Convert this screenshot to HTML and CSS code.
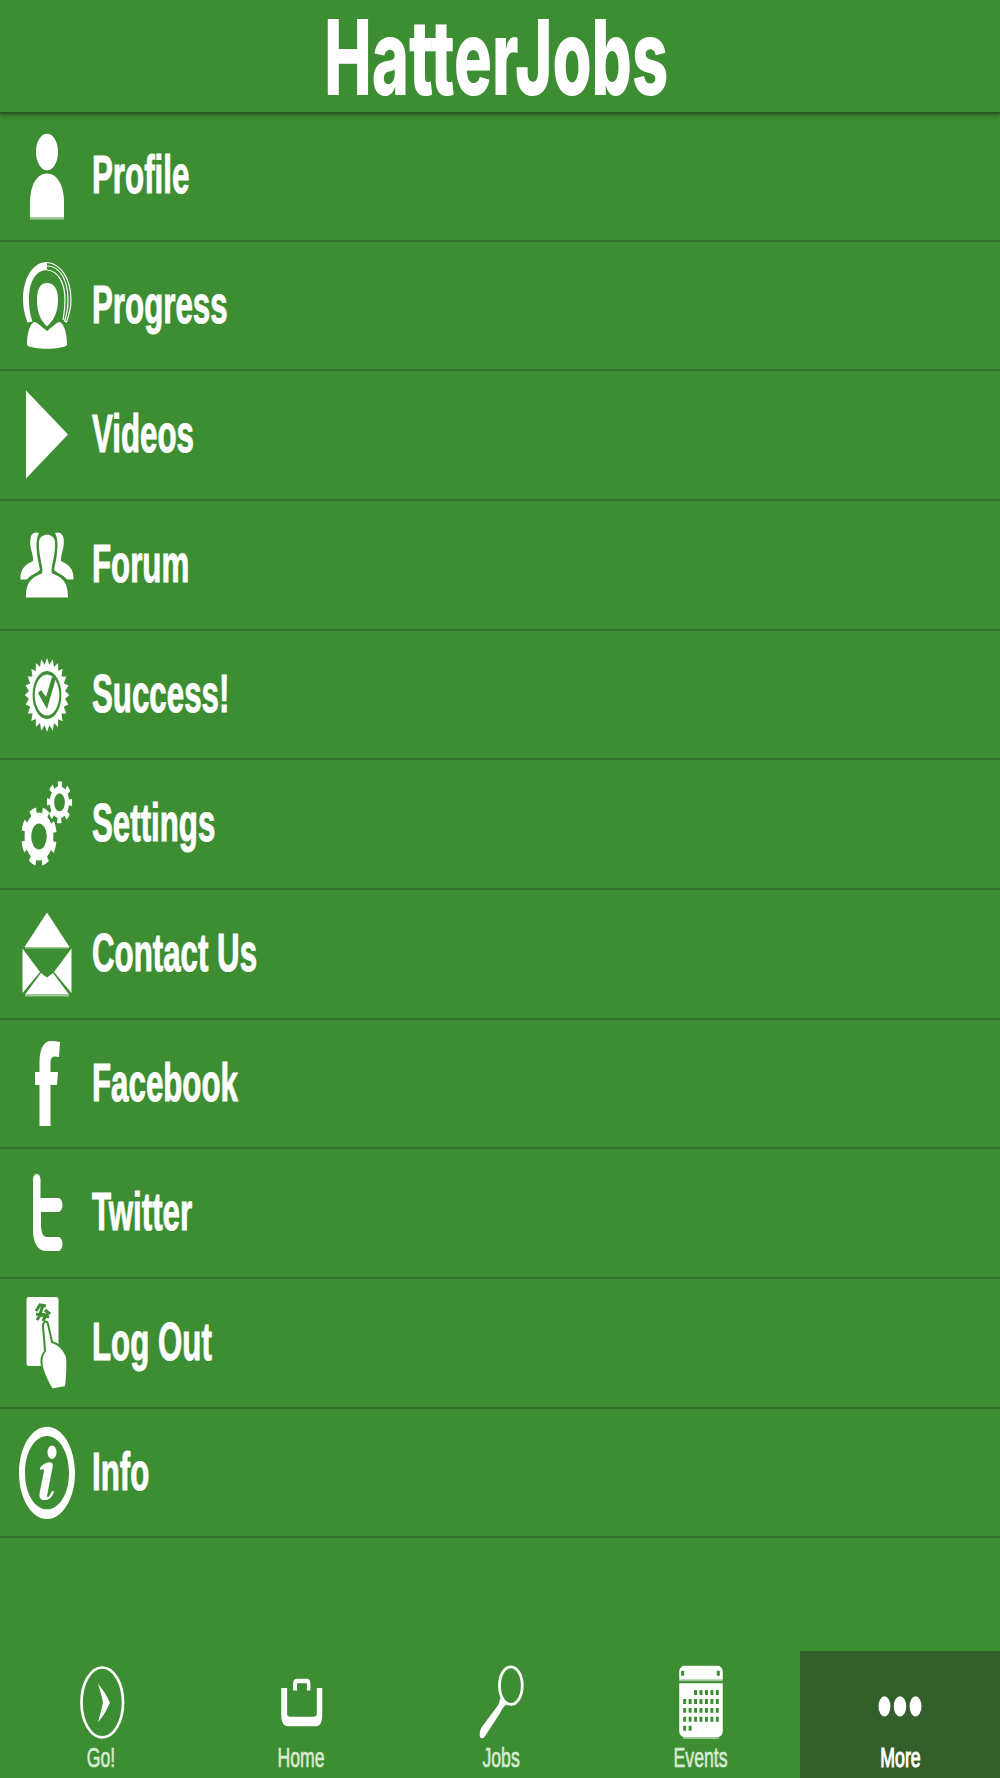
FILE: index.html
```html
<!DOCTYPE html>
<html lang="en">
<head>
<meta charset="utf-8">
<title>HatterJobs</title>
<link rel="stylesheet" href="styles.css">
</head>
<body>
<div class="app">
  <header class="header"><h1 class="title">HatterJobs</h1></header>
  <ul class="menu">
    <li class="row">
      <svg class="icon" viewBox="0 0 91 128"><ellipse cx="47" cy="40" rx="11" ry="18.300"/><path d="M30 105V91C30 73 37 61.500 47 61.500S64 73 64 91v14z"/><path class="soft" d="M30 105h34v2.500H30z"/></svg>
      <span class="label">Profile</span>
    </li>
    <li class="row">
      <svg class="icon" viewBox="0 0 91 128"><path d="M47 20C33 20 23 36 23 58c0 8 2 16 4.500 22.500l5-1C30 73 29 66 29 58c0-19 7-30 18-30z"/><path class="thin" d="M47 20.500c14 1 24 17 24 37.500 0 8-2 15-4.500 22l-2-1C67 72 68 65 68 58c0-20-8-34-21-34M47 28c12 1 18 14 18 30 0 8-1 14-2 20"/><path d="M37 58c0-11 3-17 10-17s11 6 11 17c0 13-5 21-11 26.500-6-5.500-10-13.500-10-26.500z"/><path d="M34 80c3 0 8 5 13 9 5-4 10-9 13-9 5 3 7 13 7 23-5 5-35 5-40 0 0-10 2-20 7-23z"/></svg>
      <span class="label">Progress</span>
    </li>
    <li class="row">
      <svg class="icon" viewBox="0 0 91 128"><path d="M26 19.500 68 63.500 26 107.500z"/></svg>
      <span class="label">Videos</span>
    </li>
    <li class="row">
      <svg class="icon" viewBox="0 0 91 128"><path d="M31 35c2-4 6-4 8-3-3 6-3 14-1 22 1 7 3 10 2 15-4 4-10 5-13 9.500h-6.500C20 68 25 64 33 60c1-6-5-15-2-25zM63 35c-2-4-6-4-8-3 3 6 3 14 1 22-1 7-3 10-2 15 4 4 10 5 13 9.500h6.500C74 68 69 64 61 60c-1-6 5-15 2-25z"/><path class="cut" d="M26 97c0-15 4-20 16-25 1-6-5-16-3-32 2-10 14-10 16 0 2 16-4 26-3 32 12 5 16 10 16 25z"/><path d="M26 96.500c0-15 5-20 16-24 2-6-4-18-3-32 1-9 15-9 16 0 1 14-5 26-3 32 11 4 16 9 16 24z"/></svg>
      <span class="label">Forum</span>
    </li>
    <li class="row">
      <svg class="icon" viewBox="0 0 91 128"><g transform="translate(47 64) scale(.6 1)"><path id="tri" d="M0-37 32 18.500H-32z"/><use href="#tri" transform="rotate(15)"/><use href="#tri" transform="rotate(30)"/><use href="#tri" transform="rotate(45)"/><use href="#tri" transform="rotate(60)"/><use href="#tri" transform="rotate(75)"/><use href="#tri" transform="rotate(90)"/><use href="#tri" transform="rotate(105)"/><circle class="green" r="24"/><circle r="20.500"/></g><path class="green" d="m38 62 3-3 5 7 6-20 4 1-9 31z"/></svg>
      <span class="label">Success!</span>
    </li>
    <li class="row">
      <svg class="icon" viewBox="0 0 91 128"><g transform="translate(39 76.500) scale(.6 1)"><circle class="ring" r="18.500" stroke-width="11"/><circle class="ring" r="26" stroke-width="7" stroke-dasharray="10.420 10" transform="rotate(11)"/></g><g transform="translate(59.500 42.300) scale(.6 1)"><circle class="ring" r="12.500" stroke-width="7"/><circle class="ring" r="18" stroke-width="6" stroke-dasharray="6.500 7.640" transform="rotate(-10)"/></g></svg>
      <span class="label">Settings</span>
    </li>
    <li class="row">
      <svg class="icon" viewBox="0 0 91 128"><path d="M47 22.500 69.500 57h-45zM22.500 58.500 40 82 22.500 103zM71.500 58.500 54 82l17.500 21zM25 104.500 41 83l6 4.500 6-4.500 16 21.500z"/><path class="soft" d="M25 57h44v1.500H25zM25 104.500h44v2H25z"/></svg>
      <span class="label">Contact Us</span>
    </li>
    <li class="row">
      <svg class="icon" viewBox="0 0 91 128"><path d="M39.500 106V65H35V52h4.500V43C39.500 28 44 21 51 21c3 0 6 .500 9 1l-1 15c-5-1-8.500-1-8.500 6v9H58l-1 13h-6.500v41z"/></svg>
      <span class="label">Facebook</span>
    </li>
    <li class="row">
      <svg class="icon" viewBox="0 0 91 128"><path d="M33 31c0-8 7.500-8 7.500 0v18H58c6 0 6 14 0 14H41v12c0 9 2 13 6 13h11c6 0 6 14 0 14H47c-9 0-14-7-14-22z"/></svg>
      <span class="label">Twitter</span>
    </li>
    <li class="row">
      <svg class="icon" viewBox="0 0 91 128"><path d="M29 18h27q2.500 0 2.500 3v66H29q-2.500 0-2.500-3V21q0-3 2.500-3z"/><path class="run" d="m36 32 4-6 6 1M43 26l-3 9 6 1-3 6M41 35l-4 6M45 31l5 4M36 35l13 3"/><path class="hand" d="M43 47c0-5 4-6 5-2l4 18c7 2 12 7 15 15 1 12 0 20-1 30l-14 2.500C48 104 44 96 42 88c-1-7-1-11 3-16z"/></svg>
      <span class="label">Log Out</span>
    </li>
    <li class="row">
      <svg class="icon" viewBox="0 0 91 128"><path fill-rule="evenodd" d="M47 17.700c15.500 0 28 20.700 28 46.200S62.500 110 47 110 19 89.400 19 63.900 31.500 17.700 47 17.700zM47 27c-12.400 0-22 16.500-22 36.900S34.600 100.300 47 100.300 69 84.200 69 63.900 59.400 27 47 27z"/><ellipse cx="52" cy="43.300" rx="4.500" ry="6.800"/><path d="M40 59c3-4 8-7 12-5 1 1 1 4 0 7l-5 26c0 3 3 0 5-5l2 0c-2 8-6 9-10 9-5 0-5-4-4-9l4-20c0-2-1-2-4-1z"/></svg>
      <span class="label">Info</span>
    </li>
  </ul>
  <nav class="tabs">
    <a class="tab">
      <svg class="tab-icon" viewBox="0 0 200 94"><ellipse class="line" cx="102.300" cy="52" rx="21" ry="35.300" stroke-width="2.700"/><path d="M98 33c5 6 9 12 12 19-3 8-7 14-12 20 2-8 4-14 5-20-1-6-3-12-5-19z"/></svg>
      <span class="tab-label">Go!</span>
    </a>
    <a class="tab">
      <svg class="tab-icon" viewBox="0 0 200 94"><path d="M81 37.500h6V64q0 2.500 2.500 2.500h25q2.500 0 2.500-2.500V37.500h5.500V63c0 9-2 13-6 13H88c-5 0-7-4-7-13zM93 40v-7q0-5 4-5h9.500q4 0 4 5v7H107v-7.500H97V40z"/></svg>
      <span class="tab-label">Home</span>
    </a>
    <a class="tab">
      <svg class="tab-icon" viewBox="0 0 200 94"><ellipse class="line" cx="111" cy="35" rx="11.500" ry="19" stroke-width="2.800"/><path d="m101 46 1 4 5 3.500c-3 2-5 5-7 9.500L85 86c-2 3.500-6 3-5.500-2 0-3 1-5 2-7l17-23z"/></svg>
      <span class="tab-label">Jobs</span>
    </a>
    <a class="tab">
      <svg class="tab-icon" viewBox="0 0 200 94"><path d="M83 15h36q4 2 4 6v8H79v-8q0-4 4-6zM79 32.500h44V81q0 4-4 6H83q-4-2-4-6z"/><path class="soft" d="M79 29h44v1.500H79zM83 87h36v2H83z"/><path class="green" d="M81 20h3v5h-3zM117 20h3v5h-3z"/><path class="dots" d="M94 42h26M83 51h37M83 60h37M83 69h37M83 78h10"/></svg>
      <span class="tab-label">Events</span>
    </a>
    <a class="tab active">
      <svg class="tab-icon" viewBox="0 0 200 94"><ellipse cx="84.300" cy="56" rx="6" ry="10.300"/><ellipse cx="100" cy="56" rx="6.300" ry="10.300"/><ellipse cx="115.700" cy="56" rx="6" ry="10.300"/></svg>
      <span class="tab-label">More</span>
    </a>
  </nav>
</div>
</body>
</html>
```

FILE: styles.css
```css
* { box-sizing: border-box; }
body { margin: 0; background: #3d8e33; color: #fff; font-family: "Liberation Sans", Arial, sans-serif; }
.app { width: 1000px; height: 1778px; display: flex; flex-direction: column; }
.header { height: 112px; flex: none; display: flex; justify-content: center; padding-right: 8px; box-shadow: 0 2px 2px #265c20, 0 4px 5px #2f7027; }
.title { margin: 0; font: 800 104.600px/114px Inter, sans-serif; white-space: nowrap; transform: scaleX(.605); }
.menu { list-style: none; margin: 0; padding: 0; flex: none; }
.row { height: 129.680px; display: flex; align-items: flex-start; border-bottom: 2px solid #33722b; }
.icon { width: 91px; height: 128px; flex: none; fill: #fff; }
.label { margin-left: 1px; font-size: 53px; font-weight: 700; line-height: 126px; white-space: nowrap; transform: scaleX(.59); transform-origin: left; -webkit-text-stroke: 1px #fff; }
.soft { fill: #9cc895; }
.green { fill: #3d8e33; }
.cut { fill: #3d8e33; stroke: #3d8e33; stroke-width: 4; }
.thin { fill: none; stroke: #fff; stroke-width: 1.200; }
.ring { fill: none; stroke: #fff; }
.run { fill: none; stroke: #3d8e33; stroke-width: 3; }
.hand { stroke: #3d8e33; stroke-width: 2; }
.tabs { margin-top: auto; height: 127px; flex: none; display: grid; grid-template-columns: repeat(5, 200px); }
.tab { display: flex; flex-direction: column; align-items: center; color: #d6ebd2; }
.tab-icon { width: 200px; height: 93px; flex: none; fill: #fff; }
.line { fill: none; stroke: #fff; }
.dots { fill: none; stroke: #3d8e33; stroke-width: 5; stroke-dasharray: 3 2.500; }
.tab-label { margin-left: 2px; font-size: 28.500px; line-height: 26px; white-space: nowrap; transform: scaleX(.62); -webkit-text-stroke: .7px currentColor; }
.active { background: #33602a; color: #fff; }
.active .tab-label { margin-left: 0; -webkit-text-stroke-width: 1.200px; }
```
